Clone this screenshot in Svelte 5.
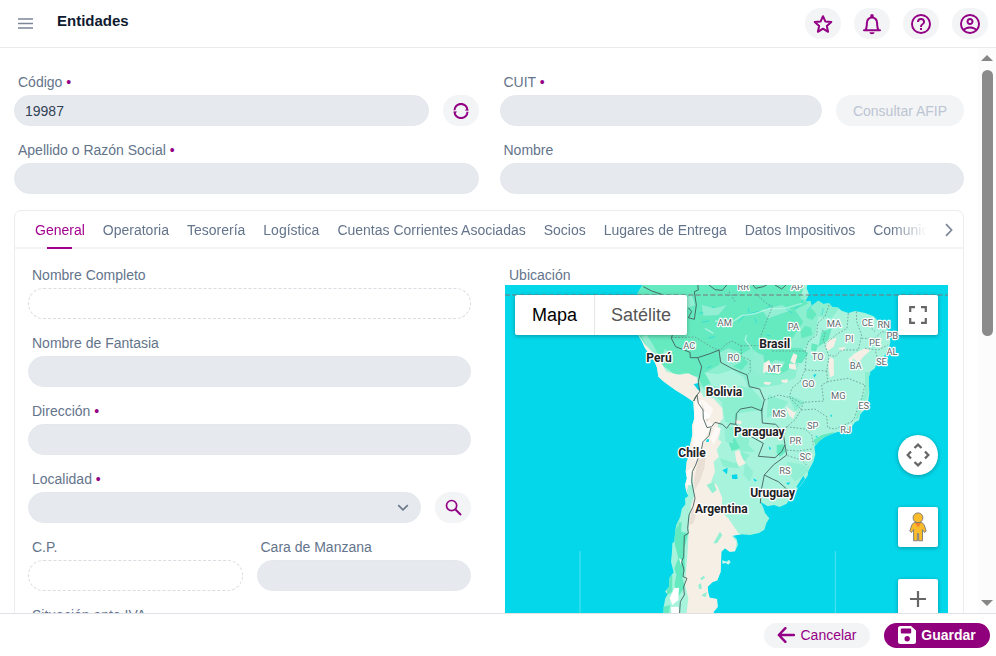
<script>
  let codigo = $state('19987');
  let activeTab = $state('General');

  const tabs = [
    'General', 'Operatoria', 'Tesorería', 'Logística', 'Cuentas Corrientes Asociadas',
    'Socios', 'Lugares de Entrega', 'Datos Impositivos', 'Comunicaciones'
  ];

  const actions = [
    { label: 'Favoritos', line: 'M12 4.2L14.3 9.4L20.3 10L15.8 13.9L17.1 19.8L12 16.7L6.9 19.8L8.2 13.9L3.7 10L9.7 9.4Z' },
    { label: 'Notificaciones', line: 'M4 18.3H20M5.4 18C6.8 16.2 6.9 14 6.9 10.8A5.1 5.3 0 0 1 17.1 10.8C17.1 14 17.2 16.2 18.6 18', d: 'M10.3 5.5V3.6A1.7 1.7 0 0 1 13.7 3.6V5.5ZM9.4 20.3H14.6A2.6 1.9 0 0 1 9.4 20.3Z' },
    { label: 'Ayuda', d: 'M11,18H13V16H11V18M12,2A10,10 0 0,0 2,12A10,10 0 0,0 12,22A10,10 0 0,0 22,12A10,10 0 0,0 12,2M12,20C7.59,20 4,16.41 4,12C4,7.59 7.59,4 12,4C16.41,4 20,7.59 20,12C20,16.41 16.41,20 12,20M12,6A4,4 0 0,0 8,10H10A2,2 0 0,1 12,8A2,2 0 0,1 14,10C14,12 11,11.75 11,15H13C13,12.75 16,12.5 16,10A4,4 0 0,0 12,6Z' },
    { label: 'Mi cuenta', d: 'M12,2A10,10 0 0,0 2,12A10,10 0 0,0 12,22A10,10 0 0,0 22,12A10,10 0 0,0 12,2M7.07,18.28C7.5,17.38 10.12,16.5 12,16.5C13.88,16.5 16.5,17.38 16.93,18.28C15.57,19.36 13.86,20 12,20C10.14,20 8.43,19.36 7.07,18.28M18.36,16.83C16.93,15.09 13.46,14.5 12,14.5C10.54,14.5 7.07,15.09 5.64,16.83C4.62,15.5 4,13.82 4,12C4,7.59 7.59,4 12,4C16.41,4 20,7.59 20,12C20,13.82 19.38,15.5 18.36,16.83M12,6C10.06,6 8.5,7.56 8.5,9.5C8.5,11.44 10.06,13 12,13C13.94,13 15.5,11.44 15.5,9.5C15.5,7.56 13.94,6 12,6M12,11A1.5,1.5 0 0,1 10.5,9.5A1.5,1.5 0 0,1 12,8A1.5,1.5 0 0,1 13.5,9.5A1.5,1.5 0 0,1 12,11Z' }
  ];

  const countries = [
    ['Brasil', 419, 177], ['Perú', 72, 217], ['Bolivia', 267, 320], ['Paraguay', 373, 439],
    ['Chile', 171, 504], ['Uruguay', 413, 623], ['Argentina', 259, 672]
  ];
  const states = [
    ['RR', 325, 5], ['AP', 486, 5], ['AM', 269, 114], ['PA', 475, 125], ['MA', 597, 116],
    ['CE', 697, 113], ['RN', 746, 120], ['PB', 772, 152], ['PI', 643, 160], ['PE', 719, 174],
    ['AL', 771, 199], ['SE', 739, 230], ['AC', 163, 182], ['RO', 296, 219], ['TO', 548, 216],
    ['MT', 418, 250], ['BA', 662, 241], ['GO', 520, 295], ['MG', 610, 332], ['ES', 686, 363],
    ['MS', 432, 386], ['SP', 533, 421], ['RJ', 632, 433], ['PR', 481, 466], ['SC', 511, 514],
    ['RS', 450, 557]
  ];
</script>

{#snippet dot()}<span class="dot" aria-hidden="true">•</span>{/snippet}

<div class="app">
  <header>
    <button class="menu" aria-label="Menú">
      <svg width="15" height="11" viewBox="0 0 15 11"><path d="M0 1H15M0 5.5H15M0 10H15" stroke="#7b8796" stroke-width="1.5" /></svg>
    </button>
    <h1>Entidades</h1>
    <div class="actions">
      {#each actions as a}
        <button class="round" aria-label={a.label}>
          <svg width="24" height="24" viewBox="0 0 24 24">
            {#if a.line}<path d={a.line} fill="none" stroke="currentColor" stroke-width="2" stroke-linejoin="round" stroke-linecap="round" />{/if}
            {#if a.d}<path fill="currentColor" d={a.d} />{/if}
          </svg>
        </button>
      {/each}
    </div>
  </header>

  <div class="body">
    <main>
      <div class="top">
        <div class="line">
          <div class="field">
            <label for="codigo">Código {@render dot()}</label>
            <input id="codigo" bind:value={codigo} />
          </div>
          <button class="round" aria-label="Actualizar">
            <svg width="16" height="16" viewBox="0 0 16 16">
              <path d="M1.5 7.2A6.5 6.3 0 0 1 14.5 7.2M14.5 8.8A6.5 6.3 0 0 1 1.5 8.8" fill="none" stroke="currentColor" stroke-width="2" />
              <path d="M15.5 7.4H11.8L14.4 4.8ZM.5 8.6H4.2L1.6 11.2Z" fill="currentColor" />
            </svg>
          </button>
        </div>
        <div class="line">
          <div class="field">
            <label for="cuit">CUIT {@render dot()}</label>
            <input id="cuit" />
          </div>
          <button class="afip" disabled>Consultar AFIP</button>
        </div>
        <div class="field">
          <label for="apellido">Apellido o Razón Social {@render dot()}</label>
          <input id="apellido" />
        </div>
        <div class="field">
          <label for="nombre">Nombre</label>
          <input id="nombre" />
        </div>
      </div>

      <section class="card">
        <div class="tabbar">
          <div class="tabs" role="tablist">
            {#each tabs as t}
              <button role="tab" class:active={t === activeTab} aria-selected={t === activeTab} onclick={() => (activeTab = t)}>{t}</button>
            {/each}
          </div>
          <button class="next" aria-label="Siguiente">
            <svg width="8" height="14" viewBox="0 0 8 14"><path d="M1 1.2L6.6 7L1 12.8" fill="none" stroke="#7b8796" stroke-width="1.7" /></svg>
          </button>
        </div>

        <div class="panel">
          <div class="form">
            <div class="field">
              <label for="completo">Nombre Completo</label>
              <input id="completo" readonly />
            </div>
            <div class="field">
              <label for="fantasia">Nombre de Fantasia</label>
              <input id="fantasia" />
            </div>
            <div class="field">
              <label for="direccion">Dirección {@render dot()}</label>
              <input id="direccion" />
            </div>
            <div class="line">
              <div class="field">
                <label for="localidad">Localidad {@render dot()}</label>
                <div class="pick">
                  <select id="localidad"><option value=""></option></select>
                  <svg width="12" height="8" viewBox="0 0 12 8"><path d="M1.2 1.2L6 5.8L10.8 1.2" fill="none" stroke="#6b7888" stroke-width="1.7" /></svg>
                </div>
              </div>
              <button class="round" aria-label="Buscar localidad">
                <svg width="17" height="17" viewBox="0 0 17 17"><circle cx="6.6" cy="6.6" r="5.1" fill="none" stroke="currentColor" stroke-width="1.7" /><path d="M10.2 10.2L16 16" stroke="currentColor" stroke-width="2" /></svg>
              </button>
            </div>
            <div class="line">
              <div class="field">
                <label for="cp">C.P.</label>
                <input id="cp" readonly />
              </div>
              <div class="field">
                <label for="manzana">Cara de Manzana</label>
                <input id="manzana" />
              </div>
            </div>
            <div class="field">
              <label for="iva">Situación ante IVA {@render dot()}</label>
              <input id="iva" />
            </div>
          </div>

          <div class="location">
            <span class="caption">Ubicación</span>
            <div class="map">
              <svg class="land" viewBox="-390 0 1329 1200" role="img" aria-label="Mapa de Sudamérica">
                <defs>
                  <clipPath id="coast">
                    <path id="shore" d="M25 -5L8 25L8 60L-5 100L10 150L22 172L30 190L45 210L58 228L66 248L70 275L84 288L100 300L122 316L150 333L175 350L178 400L171 422L172 450L165 480L166 500L155 530L152 560L156 580L150 600L155 625L160 633L150 640L151 658L140 672L136 695L124 720L120 745L118 770L112 775L111 800L108 830L112 846L116 862L103 880L102 905L90 920L98 928L91 940L86 965L85 1000L78 1050L80 1200H260L245 1080L235 1000L236 980L248 966L246 942L224 938L220 925L218 905L232 892L247 886L257 860L259 800L270 790L284 800L300 799L309 780L305 762L294 752L318 748L345 750L372 744L388 734L394 715L403 700L390 684L385 668L376 650L398 664L417 660L434 666L455 656L466 638L480 620L500 598L518 572L520 558L535 530L541 508L538 485L553 468L570 455L592 446L610 440L622 444L650 425L660 412L672 406L676 388L692 370L700 345L703 325L701 280L706 260L720 250L726 230L746 215L760 196L766 172L765 148L755 130L732 112L716 94L690 84L660 78L640 84L620 77L610 68L592 66L582 55L565 57L550 47L530 62L526 48L510 50L522 28L515 10L518 -5Z" />
                  </clipPath>
                </defs>
                <rect x="-390" width="1329" height="1200" fill="#04d7ea" />
                <use href="#shore" fill="#a8f3dc" />
                <g clip-path="url(#coast)">
                  <path fill="#8befd0" d="M380 0L620 60L590 100L550 95L540 150L500 200L480 280L430 300L350 310L385 350L380 420L320 430L270 410L260 350L190 300L180 180ZM400 330L460 350L440 375L395 400ZM275 425L350 430L340 480L360 500L320 500L290 460ZM460 330L510 350L480 380Z" />
                  <path fill="#65e9bf" d="M0 -5H510L495 40L520 55L480 75L505 110L465 170L430 185L500 190L520 205L500 235L465 230L460 255L430 270L385 265L360 225L370 205L350 190L315 210L340 232L320 255L285 240L260 215L252 240L215 260L235 290L205 305L188 275L150 265L120 270L95 250L70 235L40 195L10 150L-20 90ZM515 80L528 68L545 88L532 105L515 98ZM510 122L528 128L532 150L500 160L497 140ZM560 140L590 130L580 165L550 185ZM530 175L550 180L542 200L528 196ZM280 470L300 460L315 490L290 498Z" />
                  <path fill="#93efd3" d="M200 60L240 70L275 60L250 90L205 92ZM250 205L280 190L310 200L320 230L290 245L268 240ZM355 200L385 210L390 245L420 225L450 230L440 250L400 262L375 275L350 250ZM90 190L105 210L92 235L80 220ZM20 155L35 150L55 180L75 220L50 210ZM380 75L440 60L470 75L400 100ZM140 45L170 30L180 60L150 72Z" />
                  <path fill="#a8f3dc" d="M208 262L250 268L290 255L325 275L340 308L300 300L280 320L262 312L230 300ZM310 385L375 375L385 430L355 460L345 440L305 420ZM560 210L590 190L600 280L560 290Z" />
                  <path fill="#f5efe6" d="M10 150L30 178L75 226L94 260L135 270L160 265L185 278L192 310L205 335L235 340L262 370L264 400L248 420L256 440L250 465L260 470L245 495L252 515L236 530L240 560L228 590L246 600L262 640L258 680L280 700L310 745L322 750L290 752L305 770L300 800L320 840L260 1200H130L160 940L150 900L158 800L162 720L168 660L178 630L170 560L155 620L140 620L130 330L30 290L-10 150Z" />
                  <path fill="#fdf9f6" d="M180 350L205 345L235 372L222 405L234 420L215 450L200 495L180 530L172 500ZM155 560L172 545L168 600L152 600ZM240 425L258 430L236 480L226 460Z" />
                  <path fill="#e9dfd5" d="M200 350L210 380L225 400L216 412L204 380ZM190 525L212 515L208 550L196 585L180 615L176 590ZM172 670L185 680L176 715L162 720Z" />
                  <path fill="#65e9bf" d="M120 715L140 712L138 740L160 745L148 790L150 850L142 880L150 905L130 935L118 900L124 870L118 850L130 820L120 780L114 745ZM102 878L112 870L112 920L94 932ZM535 465L560 450L600 440L570 460L545 490ZM425 480L445 478L452 500L435 515L425 505ZM85 965L105 960L100 1000H85Z" />
                  <path fill="#93efd3" d="M215 600L235 590L245 615L232 625ZM235 775L255 740L262 750L246 775ZM196 880L206 872L210 878L200 886ZM190 900L198 894L200 912L192 912ZM205 926L216 922L212 936L200 932ZM268 430L285 435L295 475L272 470ZM330 530L355 560L345 590L325 570ZM455 530L510 540L525 555L480 590L465 570Z" />
                  <path fill="#8befd0" d="M120 690L138 680L132 720L118 740ZM690 260L705 262L700 330L680 370L670 400L660 405L675 350L690 320ZM255 520L300 535L320 500L345 510L310 550L265 545Z" />
                  <path fill="#fff" d="M118 910L132 908L130 945L112 960L104 940ZM200 375L222 385L225 400L208 402ZM108 966L130 965L134 985L110 1000ZM132 820L140 825L138 840Z" />
                  <path fill="#f5efe6" d="M580 165L605 158L596 185L578 198L572 185ZM584 215L596 222L597 270L585 278L580 240ZM640 222L660 205L690 190L708 195L685 215L670 235L655 220L646 240ZM475 205L487 210L480 238L466 228ZM386 235L402 225L412 246L440 260L430 268L398 258L384 265ZM462 236L482 238L484 255L462 250ZM452 362L476 382L484 378L474 402L462 390ZM300 500L312 495L322 520L332 535L312 545L304 530ZM438 285L460 283L455 294L440 292ZM386 290L410 292L402 300L388 298ZM300 405L320 408L318 418L300 415ZM608 190L632 185L625 198ZM245 690L262 700L275 730L310 745L290 750L262 725Z" />
                  <path fill="#04d7ea" d="M176 298L188 294L196 315L190 316ZM262 556L278 548L276 568ZM290 570L306 568L308 582L292 582ZM214 464L221 461L222 470L214 471ZM401 484L408 490L404 496ZM354 580L366 586L360 590ZM540 455L546 452L549 458ZM453 594L466 592L460 600ZM535 270L545 266L538 278ZM586 388L592 392L588 397ZM484 606L505 572L510 582L490 610Z" />
                  <path fill="none" stroke="#04d7ea" stroke-width="2" opacity=".75" d="M192 85L205 83M230 65L238 68M200 112L222 108M310 110L330 90L352 84L375 78M340 70L342 82M360 100L365 115M450 68L472 85M505 45L480 72M540 52L515 78M408 60L390 75M215 250L230 243M395 150L405 153M220 160L240 155M565 70L560 90" />
                  <path fill="none" stroke="#b9f7e6" stroke-width="4" opacity=".8" d="M240 108L290 112L320 92L360 86L400 72L450 70L500 55M350 190L330 165L335 150M210 130L235 145" />
                </g>
                <g fill="none" stroke="#3f5a57" stroke-width="2.6" stroke-linejoin="round">
                  <path d="M25 5L50 18L80 28M188 -5L190 15L178 20L184 60L178 103L160 98L170 80L160 68M222 0L240 14L262 16L275 0M350 -5L362 10L385 5L398 -2M420 0L440 12L455 -2M112 150L109 160L122 185L165 202L166 218L188 218L200 245L190 290L194 320L182 335L176 348M188 218L225 206L252 195L257 232L290 250L336 270L343 305L374 312L388 345L380 378M176 348L186 330L190 355L204 375L205 400L216 428L230 425L240 412L262 418L275 430L285 416L302 418M380 378L350 366L316 372L304 386L302 418L340 450L385 475L370 514L420 518L440 500L450 480L444 440L422 418L382 414L380 370M450 480L455 510L415 540L388 570L378 620L376 655M388 570L412 582L430 590L455 612M228 428L222 452L204 470L198 500L190 518L182 540L172 560L170 590L180 640L174 665L162 690L158 730L160 745L148 752L146 815L140 830L147 855L144 875L156 880L146 905L148 930L136 950L132 1010" />
                </g>
                <g fill="none" stroke="#5f8f87" stroke-width="2.2" stroke-dasharray="5 5">
                  <path d="M110 158L180 156L240 192L256 195L270 180L290 168L318 182H375L378 150L412 65L395 55L360 25M282 20L300 50M318 182L320 215L345 225L346 260L336 270M412 198H508L515 205L510 255L495 290L470 310L464 335L500 355M582 60L570 95L548 115L545 150L520 170L510 200M510 255L575 258L582 215L565 165L570 145L558 130M640 85L636 130L605 148L580 170M664 80L665 110L680 150L670 195L620 195L600 215L585 210M680 160L720 160L740 140L765 145M710 130L720 140M690 190L730 195L758 180M722 200L728 222M575 258L578 290L640 280L690 300L680 340L670 360L660 395L650 410M578 290L560 300L566 348L505 352L498 375L480 405L455 425L448 450M388 345L430 330L464 338L500 375L540 372L575 395L578 428L600 432L650 410M455 425L510 432L530 450L535 480M455 495L490 498L530 492M458 512L500 525L520 545" />
                </g>
                <path d="M-390 30H939" stroke="#7a7676" stroke-width="3" stroke-dasharray="15 7" />
                <path d="M-165 798V1200M601 798V1200" stroke="#55e2ef" stroke-width="3" />
                <path d="M262 826L275 830L282 824L287 832L280 839L272 834L262 836Z" fill="#c8f5e8" />
                <g class="states">
                  {#each states as [name, x, y]}<text {x} y={y + 10}>{name}</text>{/each}
                </g>
                <g class="countries">
                  {#each countries as [name, x, y]}<text {x} y={y + 13}>{name}</text>{/each}
                </g>
              </svg>

              <div class="types">
                <button class="on">Mapa</button>
                <button>Satélite</button>
              </div>
              <button class="ctl full" aria-label="Pantalla completa">
                <svg width="18" height="18" viewBox="0 0 18 18"><path d="M1.2 6V1.2H6M12 1.2H16.8V6M16.8 12V16.8H12M6 16.8H1.2V12" fill="none" stroke="#666" stroke-width="2.2" /></svg>
              </button>
              <button class="ctl pan" aria-label="Controles de cámara">
                <svg width="24" height="24" viewBox="0 0 24 24"><path d="M8.5 5L12 1.7L15.5 5M8.5 19L12 22.3L15.5 19M5 8.5L1.7 12L5 15.5M19 8.5L22.3 12L19 15.5" fill="none" stroke="#666" stroke-width="2.3" /></svg>
              </button>
              <button class="ctl peg" aria-label="Street View">
                <svg width="18" height="30" viewBox="0 0 18 30">
                  <path d="M5.2 10.5H12.8L15 12.5L17.2 19L15.6 20.6L13.5 17.5V28.8H9.6V21.5H8.4V28.8H4.6V17.5L2.4 20.6L.8 19L3 12.5Z" fill="#fbbc2c" stroke="#777" stroke-width=".9" />
                  <circle cx="9" cy="5.8" r="4.9" fill="#fbbc2c" stroke="#777" stroke-width=".9" />
                  <path d="M6 11H12L9 15.5Z" fill="#f5832a" />
                </svg>
              </button>
              <button class="ctl plus" aria-label="Acercar">
                <svg width="16" height="16" viewBox="0 0 16 16"><path d="M8 0V16M0 8H16" stroke="#666" stroke-width="2.2" /></svg>
              </button>
            </div>
          </div>
        </div>
      </section>
    </main>

    <div class="scroll" aria-hidden="true">
      <svg width="12" height="6" viewBox="0 0 12 6"><path d="M0 6L6 0L12 6Z" fill="#868686" /></svg>
      <div class="track"><div class="thumb"></div></div>
      <svg width="12" height="6" viewBox="0 0 12 6"><path d="M0 0L6 6L12 0Z" fill="#868686" /></svg>
    </div>
  </div>

  <footer>
    <button class="cancel">
      <svg width="18" height="16" viewBox="0 0 18 16"><path d="M8.4 1.2L1.8 8L8.4 14.8M2 8H17" fill="none" stroke="currentColor" stroke-width="2.4" stroke-linecap="round" stroke-linejoin="round" /></svg>
      Cancelar
    </button>
    <button class="save">
      <svg width="18" height="18" viewBox="0 0 18 18"><path fill="#fff" fill-rule="evenodd" d="M2.5 0H13L18 4.5V15.5A2.5 2.5 0 0 1 15.5 18H2.5A2.5 2.5 0 0 1 0 15.5V2.5A2.5 2.5 0 0 1 2.5 0ZM3.6 2.6A.8 .8 0 0 0 2.8 3.4V6.6A.8 .8 0 0 0 3.6 7.4H12.4A.8 .8 0 0 0 13.2 6.6V3.4A.8 .8 0 0 0 12.4 2.6ZM9.2 10A2.7 2.7 0 1 0 9.2 15.4A2.7 2.7 0 1 0 9.2 10Z" /></svg>
      Guardar
    </button>
  </footer>
</div>

<style>
  :global(body) { margin: 0; background: #fff; }

  .app {
    height: 100vh;
    display: flex;
    flex-direction: column;
    overflow: hidden;
    font: 14px/18px "Liberation Sans", Arial, sans-serif;
    color: #64748b;
  }
  button, input, select { font: inherit; color: inherit; box-sizing: border-box; margin: 0; }
  button {
    border: 0;
    padding: 0;
    background: none;
    display: flex;
    align-items: center;
    justify-content: center;
    white-space: nowrap;
    cursor: pointer;
  }
  svg { display: block; flex: none; }

  header {
    display: flex;
    align-items: center;
    height: 47px;
    flex: none;
    padding: 0 8px 0 14px;
    border-bottom: 1px solid #e9eaed;
  }
  .menu { width: 22px; height: 22px; }
  h1 { margin: 0 0 6px 21px; font-size: 15px; font-weight: 700; color: #0f1a30; }
  .actions { display: flex; gap: 13px; margin-left: auto; }
  .round { width: 36px; height: 31px; flex: none; border-radius: 16px; background: #f3f4f6; color: #930085; }

  .body { flex: 1; min-height: 0; display: flex; }
  main { flex: 1; min-width: 0; overflow-y: auto; scrollbar-width: none; padding: 25px 14px 20px; }
  .top { display: grid; grid-template-columns: 1fr 1fr; gap: 15px 21px; }
  .line { display: flex; align-items: flex-end; gap: 14px; }
  .field { flex: 1; min-width: 0; display: flex; flex-direction: column; gap: 4px; }
  label, .caption { padding-left: 4px; }
  .dot { color: #930085; }
  input, select {
    width: 100%;
    height: 31px;
    border: 1px solid #e4e8ed;
    border-radius: 16px;
    background: #e6eaef;
    padding: 0 10px;
    color: #334155;
    outline: none;
  }
  input[readonly] { background: #fff; border: 1px dashed #d9dce1; }
  select { appearance: none; display: block; }
  .pick { position: relative; }
  .pick svg { position: absolute; right: 12px; top: 12px; pointer-events: none; }
  .afip { width: 128px; height: 31px; border-radius: 16px; background: #f3f4f6; color: #bcc5d2; }

  .card { margin-top: 16px; border: 1px solid #ebecf0; border-radius: 7px; }
  .tabbar { display: flex; height: 36px; border-bottom: 2px solid #f3f4f6; }
  .tabs {
    flex: 1;
    min-width: 0;
    display: flex;
    gap: 18px;
    height: 38px;
    padding-left: 20px;
    overflow: hidden;
    -webkit-mask-image: linear-gradient(to left, transparent, #000 36px);
    mask-image: linear-gradient(to left, transparent, #000 36px);
  }
  .tabs button { flex: none; flex-direction: column; justify-content: flex-end; }
  .tabs button::after { content: ""; width: 25px; height: 2px; margin-top: 8px; }
  .tabs .active { color: #a3008f; }
  .tabs .active::after { background: #a3008f; }
  .next { width: 36px; padding: 2px 0 0 8px; }

  .panel { display: grid; grid-template-columns: 1fr 1fr; align-items: start; gap: 34px; padding: 17px 15px 20px 13px; }
  .form { display: flex; flex-direction: column; gap: 15px; }
  .form > .field { flex: none; }
  .location { display: flex; flex-direction: column; gap: 1px; min-width: 0; }
  .map { position: relative; }
  .land { width: 100%; height: auto; }
  .land text { font-family: Roboto, "Liberation Sans", sans-serif; text-anchor: middle; paint-order: stroke; stroke: #fff; stroke-linejoin: round; }
  .states text { font-size: 28px; fill: #5c6a6d; stroke-width: 7px; }
  .countries text { font-size: 36px; font-weight: 700; fill: #202124; stroke-width: 8px; }

  .types {
    position: absolute;
    top: 10px;
    left: 10px;
    display: flex;
    height: 40px;
    background: #fff;
    border-radius: 2px;
    box-shadow: 0 1px 4px rgba(0, 0, 0, .3);
    font-size: 18px;
  }
  .types button { padding: 0 17px; color: #565656; }
  .types button + button { padding: 0 16px; border-left: 1px solid #e6e6e6; }
  .types .on { color: #000; }
  .ctl {
    position: absolute;
    right: 10px;
    width: 40px;
    height: 40px;
    background: #fff;
    border-radius: 2px;
    box-shadow: 0 1px 4px rgba(0, 0, 0, .3);
  }
  .full { top: 10px; }
  .pan { top: 150px; border-radius: 50%; }
  .peg { top: 222px; }
  .plus { top: 294px; }

  .scroll {
    width: 18px;
    flex: none;
    background: #fcfcfc;
    display: flex;
    flex-direction: column;
    align-items: center;
    gap: 9px;
    padding: 7px 0;
    box-sizing: border-box;
  }
  .track { flex: 1; align-self: stretch; display: flex; justify-content: center; }
  .thumb { width: 11px; height: 51%; border-radius: 6px; background: #8b8b8b; }

  footer {
    flex: none;
    display: flex;
    justify-content: flex-end;
    align-items: center;
    gap: 14px;
    height: 42px;
    padding-right: 6px;
    border-top: 1px solid #dfe1e7;
  }
  footer button { height: 25px; width: 106px; gap: 5px; border-radius: 13px; }
  .cancel { background: #f3f4f6; color: #930085; }
  .save { background: #90007c; color: #fff; font-weight: 700; }
</style>
